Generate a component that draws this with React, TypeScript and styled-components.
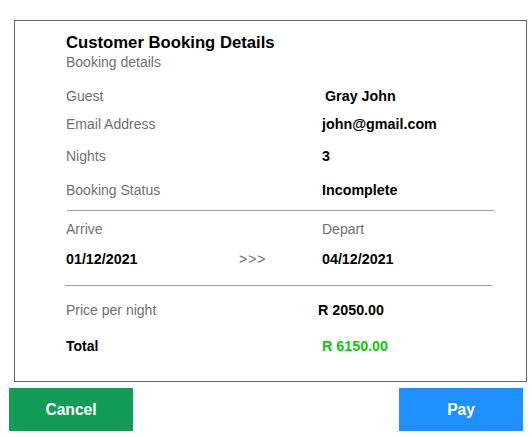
import React from "react"
import styled, { createGlobalStyle } from "styled-components"

const GlobalStyle = createGlobalStyle`
  body {
    margin: 0;
    background: #fff;
    font-family: "Liberation Sans", Arial, sans-serif;
  }
`

const Page = styled.div`
  width: 532px;
  height: 437px;
  display: flex;
  flex-direction: column;
`

const Card = styled.section`
  margin: 20px 0 0 14px;
  width: 513px;
  height: 362px;
  box-sizing: border-box;
  border: 1px solid #666;
  padding: 12px 0 0 51px;
`

const Title = styled.h2`
  margin: 0;
  font-size: 16.7px;
  line-height: 20px;
  font-weight: bold;
  color: #000;
`

const Subtitle = styled.div`
  margin-top: 1px;
  font-size: 14px;
  line-height: 16px;
  color: #707070;
`

const Row = styled.div<{ $mt: number; $cols?: string }>`
  display: grid;
  grid-template-columns: ${(p) => p.$cols || "256px 1fr"};
  margin-top: ${(p) => p.$mt}px;
  height: 16px;
  align-items: center;
`

const Label = styled.span<{ $strong?: boolean }>`
  font-size: 14px;
  line-height: 16px;
  color: ${(p) => (p.$strong ? "#000" : "#707070")};
  font-weight: ${(p) => (p.$strong ? "bold" : "normal")};
`

const Value = styled.span<{ $shift?: number; $green?: boolean }>`
  font-size: 14.3px;
  line-height: 16px;
  font-weight: bold;
  color: ${(p) => (p.$green ? "#12c412" : "#000")};
  padding-left: ${(p) => Math.max(p.$shift || 0, 0)}px;
  margin-left: ${(p) => Math.min(p.$shift || 0, 0)}px;
`

const Arrows = styled.span`
  font-size: 14px;
  line-height: 16px;
  color: #707070;
  letter-spacing: 1px;
`

const Divider = styled.hr<{ $mt: number; $w: number; $ml?: number }>`
  border: 0;
  border-top: 1px solid #a0a0a0;
  margin: ${(p) => p.$mt}px 0 0 ${(p) => p.$ml || 0}px;
  width: ${(p) => p.$w}px;
  height: 0;
`

const Actions = styled.div`
  display: flex;
  justify-content: space-between;
  padding: 6px 9px 0 9px;
`

const Button = styled.button<{ $color: string }>`
  width: 124px;
  height: 43px;
  border: 0;
  background: ${(p) => p.$color};
  color: #fff;
  font-family: "Liberation Sans", Arial, sans-serif;
  font-size: 15.6px;
  font-weight: bold;
  cursor: pointer;
`

export default function App() {
  return (
    <Page>
      <GlobalStyle />
      <Card>
        <Title>Customer Booking Details</Title>
        <Subtitle>Booking details</Subtitle>

        <Row $mt={18}>
          <Label>Guest</Label>
          <Value $shift={3}>Gray John</Value>
        </Row>
        <Row $mt={12}>
          <Label>Email Address</Label>
          <Value>john@gmail.com</Value>
        </Row>
        <Row $mt={16}>
          <Label>Nights</Label>
          <Value>3</Value>
        </Row>
        <Row $mt={18}>
          <Label>Booking Status</Label>
          <Value>Incomplete</Value>
        </Row>

        <Divider $mt={12} $w={427} $ml={1} />

        <Row $mt={10}>
          <Label>Arrive</Label>
          <Label>Depart</Label>
        </Row>
        <Row $mt={14} $cols="173px 83px 1fr">
          <Value>01/12/2021</Value>
          <Arrows>&gt;&gt;&gt;</Arrows>
          <Value>04/12/2021</Value>
        </Row>

        <Divider $mt={18} $w={427} $ml={-1} />

        <Row $mt={16}>
          <Label>Price per night</Label>
          <Value $shift={-4}>R 2050.00</Value>
        </Row>
        <Row $mt={20}>
          <Label $strong>Total</Label>
          <Value $green>R 6150.00</Value>
        </Row>
      </Card>
      <Actions>
        <Button $color="#129c57">Cancel</Button>
        <Button $color="#1f90ff">Pay</Button>
      </Actions>
    </Page>
  )
}
